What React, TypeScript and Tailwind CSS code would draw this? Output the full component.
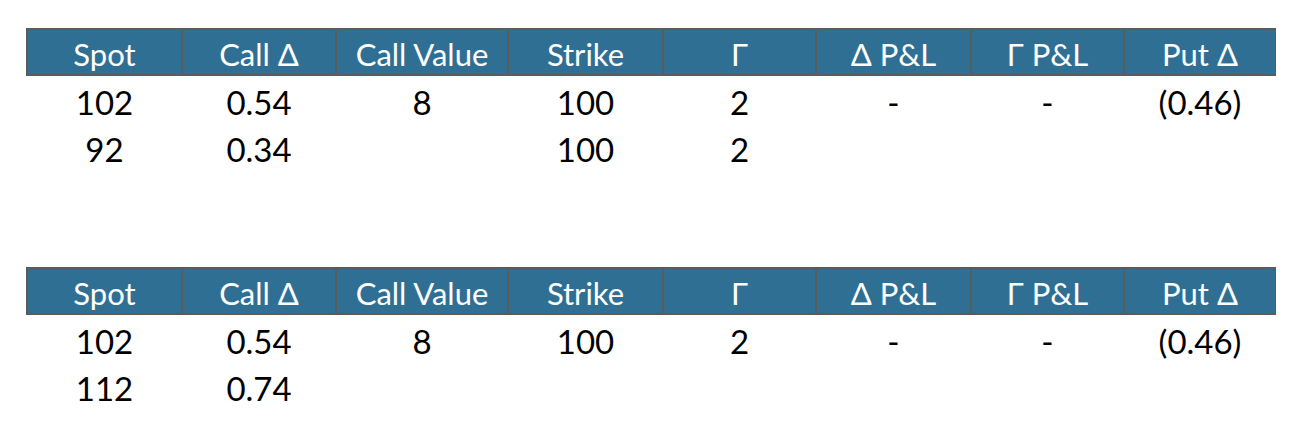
const columns = ['Spot', 'Call Δ', 'Call Value', 'Strike', 'Γ', 'Δ P&L', 'Γ P&L', 'Put Δ'];

const tables: string[][][] = [
  [
    ['102', '0.54', '8', '100', '2', '-', '-', '(0.46)'],
    ['92', '0.34', '', '100', '2', '', '', ''],
  ],
  [
    ['102', '0.54', '8', '100', '2', '-', '-', '(0.46)'],
    ['112', '0.74', '', '', '', '', '', ''],
  ],
];

const gridCols = 'grid grid-cols-[153px_152px_170px_153px_151px_153px_151px_150px]';

function GreeksTable({ rows }: { rows: string[][] }) {
  return (
    <div className="w-[1250px]">
      {/* Header */}
      <div className={`${gridCols} gap-[2px] border-2 border-[#5b5b5b] bg-[#5b5b5b]`}>
        {columns.map((col) => (
          <div
            key={col}
            className="flex h-[44px] items-center justify-center bg-[#306f94] pt-[5px] text-[31px] leading-none text-white"
          >
            {col}
          </div>
        ))}
      </div>

      {/* Rows */}
      <div className="pt-[3px]">
        {rows.map((row, i) => (
          <div key={i} className={`${gridCols} gap-[2px] px-[2px]`}>
            {row.map((cell, j) => (
              <div key={j} className="flex h-[47px] items-center justify-center text-[33px] text-black">
                {cell}
              </div>
            ))}
          </div>
        ))}
      </div>
    </div>
  );
}

export default function App() {
  return (
    <div
      className="flex h-[426px] w-[1304px] flex-col gap-[94px] bg-white pl-[26px] pt-[28px]"
      style={{ fontFamily: 'Lato, "Open Sans", sans-serif' }}
    >
      {tables.map((rows, i) => (
        <GreeksTable key={i} rows={rows} />
      ))}
    </div>
  );
}
